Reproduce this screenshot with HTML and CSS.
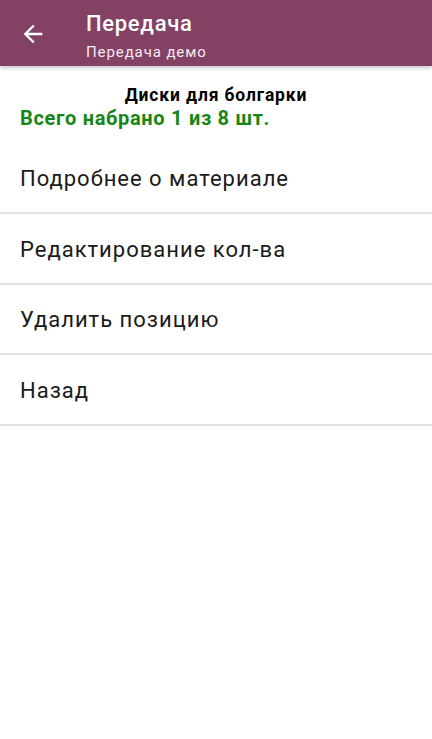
FILE: index.html
```html
<!DOCTYPE html>
<html lang="ru">
<head>
<meta charset="utf-8">
<meta name="viewport" content="width=device-width, initial-scale=1">
<title>Передача</title>
<link rel="stylesheet" href="styles.css">
</head>
<body>
<header class="appbar">
  <button class="appbar__back" aria-label="Назад">
    <svg viewBox="0 0 24 24" width="28" height="28"><path fill="#ffffff" d="M20 11H7.83l5.59-5.59L12 4l-8 8 8 8 1.41-1.41L7.83 13H20v-2z"/></svg>
  </button>
  <div class="appbar__titles">
    <div class="appbar__title">Передача</div>
    <div class="appbar__subtitle">Передача демо</div>
  </div>
</header>
<main>
  <section class="info">
    <div class="info__name">Диски для болгарки</div>
    <div class="info__count">Всего набрано 1 из 8 шт.</div>
  </section>
  <ul class="menu">
    <li class="menu__item">Подробнее о материале</li>
    <li class="menu__item">Редактирование кол-ва</li>
    <li class="menu__item">Удалить позицию</li>
    <li class="menu__item">Назад</li>
  </ul>
</main>
</body>
</html>
```
FILE: styles.css
```css
html, body {
  margin: 0;
  padding: 0;
  background: #ffffff;
  font-family: Roboto, "Noto Sans", "Liberation Sans", sans-serif;
}

.appbar {
  height: 66px;
  background: #834264;
  display: flex;
  align-items: flex-start;
  box-shadow: 0 2px 4px rgba(0, 0, 0, 0.22);
  position: relative;
  z-index: 1;
}

.appbar__back {
  width: 28px;
  height: 28px;
  margin: 20px 39px 0 19px;
  padding: 0;
  border: 0;
  background: transparent;
  display: flex;
}

.appbar__titles {
  display: flex;
  flex-direction: column;
  color: #ffffff;
  padding-top: 11px;
}

.appbar__title {
  font-size: 22px;
  font-weight: 500;
  line-height: 26px;
  letter-spacing: 0.7px;
}

.appbar__subtitle {
  font-size: 15px;
  line-height: 20px;
  margin-top: 4.5px;
  letter-spacing: 0.9px;
  color: #f4eaf0;
}

.info {
  padding: 19px 20px 12.33px;
}

.info__name {
  text-align: center;
  font-size: 17.5px;
  font-weight: 700;
  line-height: 20px;
  letter-spacing: 0.85px;
  color: #000000;
}

.info__count {
  font-size: 20px;
  font-weight: 700;
  line-height: 26px;
  letter-spacing: 0.7px;
  color: #178617;
}

.menu {
  list-style: none;
  margin: 0;
  padding: 0;
}

.menu__item {
  height: 66.67px;
  padding: 2px 20px 0;
  display: flex;
  align-items: center;
  font-size: 22px;
  letter-spacing: 1px;
  color: #1a1a1a;
  border-bottom: 2px solid #e2e2e2;
}
```
